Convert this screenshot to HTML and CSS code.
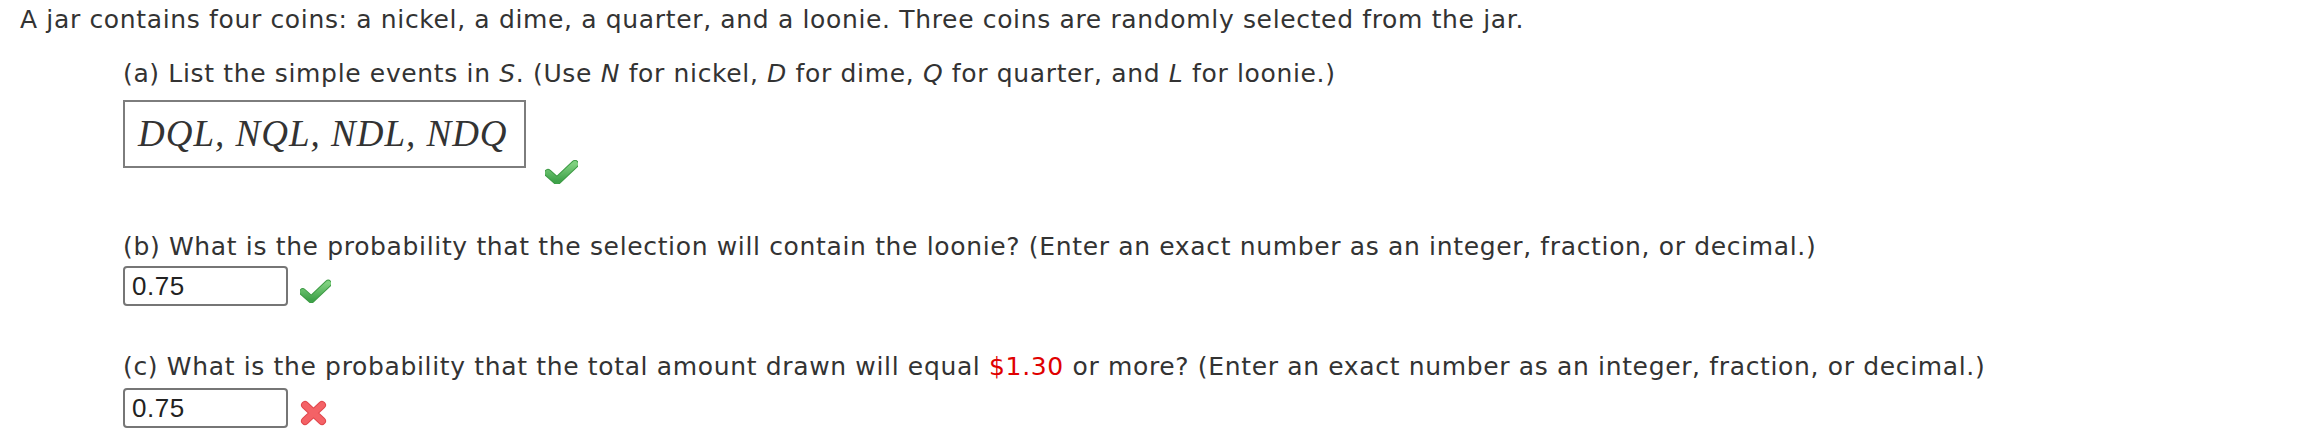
FILE: index.html
```html
<!DOCTYPE html>
<html>
<head>
<meta charset="utf-8">
<link rel="stylesheet" href="styles.css">
</head>
<body>
<div class="question">
  <p class="stem">A jar contains four coins: a nickel, a dime, a quarter, and a loonie. Three coins are randomly selected from the jar.</p>
  <div class="part part-a">
    <p class="prompt">(a) List the simple events in <i>S</i>. (Use <i>N</i> for nickel, <i>D</i> for dime, <i>Q</i> for quarter, and <i>L</i> for loonie.)</p>
    <div class="answer-row">
      <div class="math-box">DQL, NQL, NDL, NDQ</div>
      <svg class="icon check check-a" width="33" height="24" viewBox="0 0 33 24">
        <defs>
          <linearGradient id="g1" x1="0" y1="0" x2="0" y2="1">
            <stop offset="0" stop-color="#7fd07f"/>
            <stop offset="1" stop-color="#3fa24a"/>
          </linearGradient>
        </defs>
        <path d="M3 13 L12 21 L30 4" fill="none" stroke="#3c9a44" stroke-width="8" stroke-linejoin="round" stroke-linecap="round"/>
        <path d="M3 13 L12 21 L30 4" fill="none" stroke="url(#g1)" stroke-width="6" stroke-linejoin="round" stroke-linecap="round"/>
      </svg>
    </div>
  </div>
  <div class="part part-b">
    <p class="prompt">(b) What is the probability that the selection will contain the loonie? (Enter an exact number as an integer, fraction, or decimal.)</p>
    <div class="answer-row">
      <div class="input">0.75</div>
      <svg class="icon check check-b" width="31" height="24" viewBox="0 0 33 24">
        <path d="M3 13 L12 21 L30 4" fill="none" stroke="#3c9a44" stroke-width="8" stroke-linejoin="round" stroke-linecap="round"/>
        <path d="M3 13 L12 21 L30 4" fill="none" stroke="url(#g1)" stroke-width="6" stroke-linejoin="round" stroke-linecap="round"/>
      </svg>
    </div>
  </div>
  <div class="part part-c">
    <p class="prompt">(c) What is the probability that the total amount drawn will equal <span class="red">$1.30</span> or more? (Enter an exact number as an integer, fraction, or decimal.)</p>
    <div class="answer-row">
      <div class="input">0.75</div>
      <svg class="icon cross" width="27" height="26" viewBox="0 0 27 26">
        <path d="M5 5 L22 21 M22 5 L5 21" fill="none" stroke="#e0474c" stroke-width="8" stroke-linecap="round"/>
        <path d="M5 5 L22 21 M22 5 L5 21" fill="none" stroke="#f46266" stroke-width="6" stroke-linecap="round"/>
      </svg>
    </div>
  </div>
</div>
</body>
</html>
```

FILE: styles.css
```css
html, body {
  margin: 0;
  padding: 0;
  background: #ffffff;
}
body {
  font-family: "DejaVu Sans", Verdana, sans-serif;
  font-size: 25px;
  letter-spacing: 0.65px;
  color: #333333;
}
.question {
  padding: 2px 0 0 20px;
}
p {
  margin: 0;
  line-height: 36px;
  white-space: nowrap;
}
.part {
  margin-left: 103px;
}
.part-a {
  margin-top: 18px;
}
.part-a .answer-row {
  margin-top: 8px;
}
.answer-row {
  display: flex;
  align-items: flex-start;
}
.math-box {
  box-sizing: border-box;
  width: 403px;
  height: 68px;
  border: 2px solid #7d7d7d;
  font-family: "Liberation Serif", "Times New Roman", serif;
  font-style: italic;
  font-size: 37px;
  letter-spacing: 1px;
  line-height: 64px;
  padding-left: 13px;
  color: #333333;
}
.check-a {
  margin-left: 19px;
  margin-top: 60px;
}
.part-b {
  margin-top: 45px;
}
.part-b .answer-row {
  margin-top: 1px;
}
.part-c {
  margin-top: 43px;
}
.part-c .answer-row {
  margin-top: 3px;
}
.input {
  box-sizing: border-box;
  width: 165px;
  height: 40px;
  border: 2px solid #767676;
  border-radius: 4px;
  font-family: "Liberation Sans", Arial, sans-serif;
  font-size: 26px;
  letter-spacing: 0.5px;
  line-height: 36px;
  padding-left: 7px;
  color: #222222;
}
.check-b {
  margin-left: 12px;
  margin-top: 13px;
}
.cross {
  margin-left: 12px;
  margin-top: 12px;
}
.red {
  color: #e00000;
}
```
